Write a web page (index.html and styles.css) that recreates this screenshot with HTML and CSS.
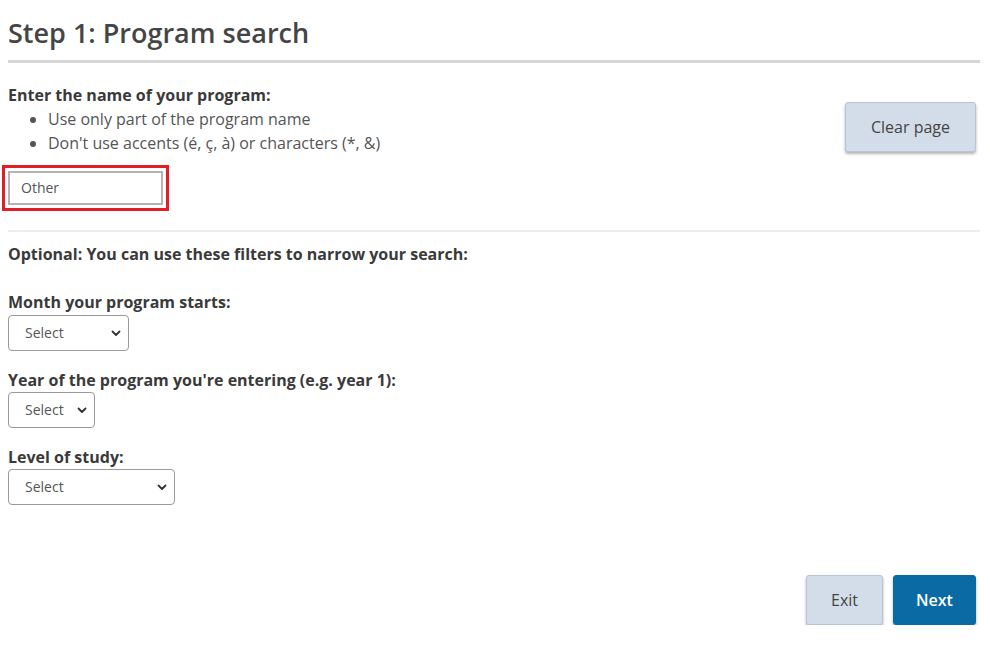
FILE: index.html
```html
<!DOCTYPE html>
<html lang="en">
<head>
<meta charset="utf-8">
<title>Step 1: Program search</title>
<link rel="stylesheet" href="styles.css">
</head>
<body>
<div class="page">
  <h1 class="title">Step 1: Program search</h1>
  <div class="rule"></div>

  <div class="intro">
    <div class="intro-text">
      <div class="label">Enter the name of your program:</div>
      <ul class="hints">
        <li>Use only part of the program name</li>
        <li>Don't use accents (é, ç, à) or characters (*, &amp;)</li>
      </ul>
      <div class="search-field">Other</div>
    </div>
    <button class="btn btn-light btn-clear">Clear page</button>
  </div>

  <div class="divider"></div>

  <div class="label optional">Optional: You can use these filters to narrow your search:</div>

  <div class="filter first">
    <div class="label">Month your program starts:</div>
    <div class="select w-month"><span>Select</span><svg width="10" height="7" viewBox="0 0 10 7"><path d="M1.5 1.5 L5 5 L8.5 1.5" fill="none" stroke="#333" stroke-width="1.8" stroke-linecap="round" stroke-linejoin="round"/></svg></div>
  </div>

  <div class="filter">
    <div class="label">Year of the program you're entering (e.g. year 1):</div>
    <div class="select w-year"><span>Select</span><svg width="10" height="7" viewBox="0 0 10 7"><path d="M1.5 1.5 L5 5 L8.5 1.5" fill="none" stroke="#333" stroke-width="1.8" stroke-linecap="round" stroke-linejoin="round"/></svg></div>
  </div>

  <div class="filter">
    <div class="label">Level of study:</div>
    <div class="select w-level"><span>Select</span><svg width="10" height="7" viewBox="0 0 10 7"><path d="M1.5 1.5 L5 5 L8.5 1.5" fill="none" stroke="#333" stroke-width="1.8" stroke-linecap="round" stroke-linejoin="round"/></svg></div>
  </div>

  <div class="footer">
    <button class="btn btn-light btn-exit">Exit</button>
    <button class="btn btn-primary btn-next">Next</button>
  </div>
</div>
</body>
</html>
```

FILE: styles.css
```css
* { box-sizing: border-box; }

html, body {
  margin: 0;
  padding: 0;
  background: #ffffff;
}

body {
  font-family: "Open Sans", "Liberation Sans", sans-serif;
  font-size: 16px;
  line-height: 24px;
  color: #3b3b3b;
}

.page {
  padding: 15px 10px 0 8px;
}

.title {
  margin: 0;
  font-size: 27px;
  line-height: 36px;
  font-weight: 600;
  color: #454545;
}

.rule {
  margin-top: 9px;
  height: 3px;
  background: #d6d6d6;
}

.intro {
  display: flex;
  justify-content: space-between;
  align-items: flex-start;
  margin-top: 20px;
}

.label {
  font-weight: 700;
  color: #3a3a3a;
}

.hints {
  margin: 0;
  padding-left: 40px;
  color: #555555;
}

.search-field {
  margin-top: 16px;
  width: 155px;
  height: 34px;
  border: 2px solid #b4b4b4;
  padding-left: 11px;
  font-size: 14px;
  line-height: 30px;
  color: #555555;
  outline: 3px solid #e31e26;
  outline-offset: 3px;
}

.btn {
  font-family: "Open Sans", "Liberation Sans", sans-serif;
  font-size: 16px;
  border-radius: 3px;
  height: 50px;
  cursor: pointer;
  padding: 0;
}

.btn-light {
  background: #d3dde9;
  border: 1px solid #b9c5d2;
  color: #444444;
  box-shadow: 0 2px 3px rgba(0, 0, 0, 0.3);
}

.btn-primary {
  background: #0a6aa4;
  border: 1px solid #0a6aa4;
  color: #ffffff;
  font-weight: 600;
  box-shadow: 0 2px 3px rgba(0, 0, 0, 0.3);
}

.btn-clear {
  width: 131px;
  margin-top: 19px;
  margin-right: 4px;
}

.divider {
  margin-top: 25px;
  height: 2px;
  background: #ededed;
}

.optional {
  margin-top: 10px;
}

.filter {
  margin-top: 17px;
}

.filter.first {
  margin-top: 24px;
}

.select {
  display: flex;
  align-items: center;
  justify-content: space-between;
  height: 36px;
  margin-top: 0;
  border: 1px solid #9a9a9a;
  border-radius: 4px;
  padding: 0 7px 0 16px;
  font-size: 14px;
  color: #555555;
}

.filter.first .select {
  margin-top: 1px;
}

.select svg {
  flex: none;
}

.w-month { width: 121px; }
.w-year { width: 87px; }
.w-level { width: 167px; }

.footer {
  display: flex;
  justify-content: flex-end;
  gap: 10px;
  margin-top: 70px;
  padding-right: 4px;
}

.btn-exit { width: 77px; }
.btn-next { width: 83px; }
```
